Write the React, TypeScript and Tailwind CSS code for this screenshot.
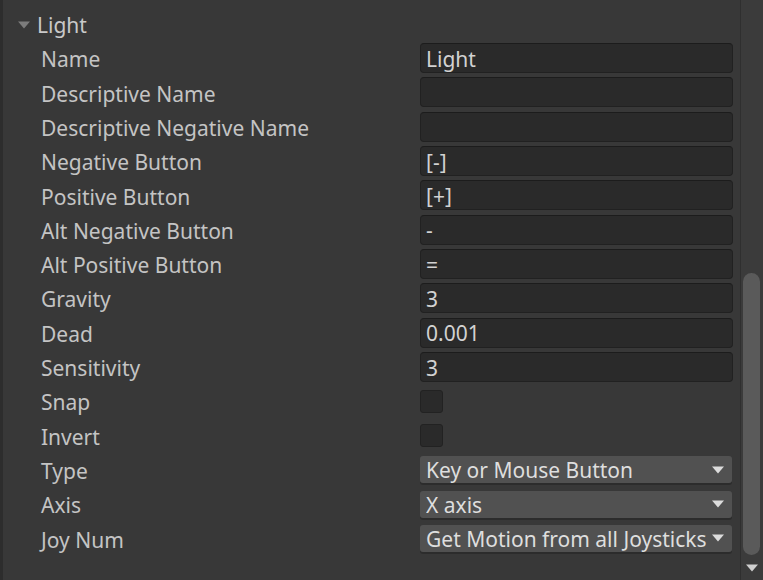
const FONT = "font-['Noto_Sans','Open_Sans',sans-serif]";

type Row =
  | { label: string; kind: "text"; value: string }
  | { label: string; kind: "check" }
  | { label: string; kind: "select"; value: string };

const ROWS: Row[] = [
  { label: "Name", kind: "text", value: "Light" },
  { label: "Descriptive Name", kind: "text", value: "" },
  { label: "Descriptive Negative Name", kind: "text", value: "" },
  { label: "Negative Button", kind: "text", value: "[-]" },
  { label: "Positive Button", kind: "text", value: "[+]" },
  { label: "Alt Negative Button", kind: "text", value: "-" },
  { label: "Alt Positive Button", kind: "text", value: "=" },
  { label: "Gravity", kind: "text", value: "3" },
  { label: "Dead", kind: "text", value: "0.001" },
  { label: "Sensitivity", kind: "text", value: "3" },
  { label: "Snap", kind: "check" },
  { label: "Invert", kind: "check" },
  { label: "Type", kind: "select", value: "Key or Mouse Button" },
  { label: "Axis", kind: "select", value: "X axis" },
  { label: "Joy Num", kind: "select", value: "Get Motion from all Joysticks" },
];

function Caret({ className = "" }: { className?: string }) {
  return (
    <svg width="12" height="8" viewBox="0 0 12 8" className={className}>
      <path d="M0 0.5 H12 L6 7.5 Z" fill="currentColor" />
    </svg>
  );
}

function Field({ row }: { row: Row }) {
  if (row.kind === "text") {
    return (
      <div className="flex h-[30px] w-[313px] items-center rounded-[4px] border border-[#212121] border-t-[#1c1c1c] bg-[#2a2a2a] pl-[5px] pt-[3px] text-[21px] text-[#d2d2d2]">
        {row.value}
      </div>
    );
  }
  if (row.kind === "check") {
    return <div className="h-[23px] w-[23px] rounded-[3px] border border-[#222] bg-[#2a2a2a]" />;
  }
  return (
    <div className="flex h-[27px] w-[312px] items-center overflow-hidden rounded-[3px] bg-[#515151] pl-[6px] pr-[8px] text-[21px] text-[#dedede] shadow-[0_2px_0_#2c2c2c]">
      <span className="flex-1 overflow-hidden whitespace-nowrap pt-[3px]">{row.value}</span>
      <Caret className="shrink-0 text-[#dcdcdc]" />
    </div>
  );
}

export default function App() {
  return (
    <div className={`flex h-[580px] w-[763px] overflow-hidden bg-[#383838] ${FONT}`}>
      <div className="w-[3px] bg-[#2d2d2d]" />
      <div className="flex-1">
        <div className="flex h-[41px] items-center pl-[15px] pt-[8px]">
          <div className="flex items-center gap-[7px]">
            <Caret className="text-[#7c7c7c]" />
            <span className="pt-[3px] text-[21px] text-[#c9c9c9]">Light</span>
          </div>
        </div>
        {ROWS.map((row) => (
          <div key={row.label} className="flex h-[34.3px] items-center">
            <div className="w-[417px] pl-[38px] pt-[4px] text-[21px] text-[#c4c4c4]">{row.label}</div>
            <Field row={row} />
          </div>
        ))}
      </div>
      <div className="flex w-[23px] flex-col border-l border-[#2f2f2f] bg-[#3b3b3b] pl-[2px] pr-[3px]">
        <div className="mt-[273px] h-[282px] w-[17px] rounded-full bg-[#5a5a5a]" />
        <div className="flex flex-1 items-center justify-center">
          <Caret className="text-[#cfcfcf]" />
        </div>
      </div>
    </div>
  );
}
